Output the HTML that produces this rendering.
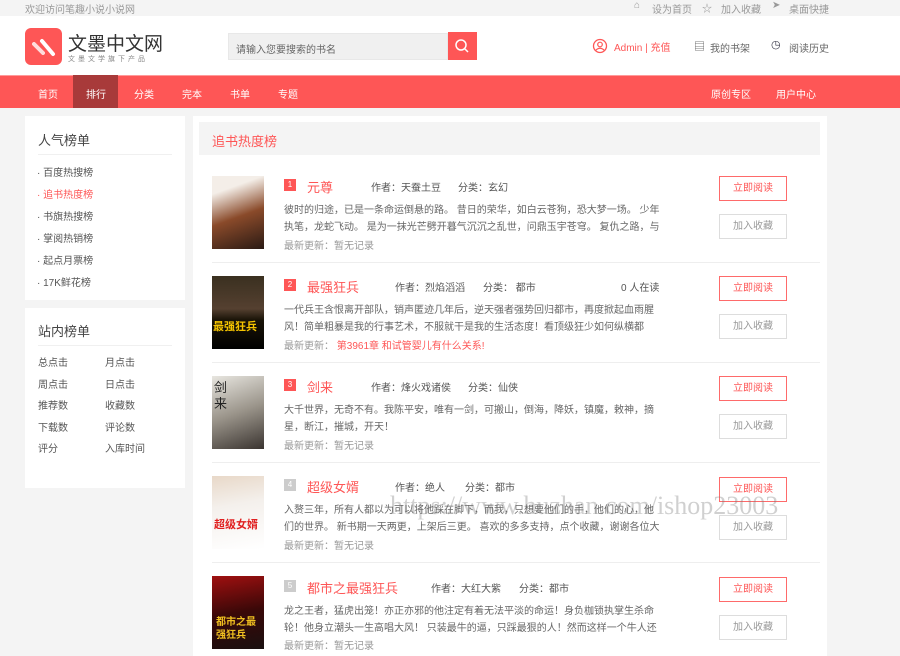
<!DOCTYPE html><html><head><meta charset="utf-8"><style>
*{margin:0;padding:0;box-sizing:border-box}
body{width:900px;height:652px;overflow:hidden;background:#f4f4f4;font-family:"Liberation Sans","Noto Sans CJK SC",sans-serif;font-size:11px;color:#555;position:relative}
.a{position:absolute;white-space:nowrap}
.top{position:absolute;left:0;top:0;width:900px;height:16px;background:#f4f4f4;color:#999;font-size:10px}
.hdr{position:absolute;left:0;top:16px;width:900px;height:59px;background:#fff}
.nav{position:absolute;left:0;top:75px;width:900px;height:33px;background:#fe5656;border-top:1px solid #ff9a9a}
.nav span{position:absolute;top:10px;color:#fff;font-size:10px}
.box{position:absolute;background:#fff}
.cover{position:absolute;left:212px;width:52px;height:73px}
.badge{position:absolute;left:284px;width:12px;height:12px;background:#fe5656;color:#fff;font-size:8px;text-align:center;line-height:12px}
.t{color:#fe5656;font-size:13px}
.desc{position:absolute;left:284px;width:378px;white-space:normal;font-size:10px;line-height:17px;color:#666;height:34px;overflow:hidden}
.btn{position:absolute;left:719px;width:68px;height:25px;font-size:10px;text-align:center;line-height:23px}
.r{border:1px solid #fe6a6a;color:#fe5656}
.g{border:1px solid #ddd;color:#999}
.sep{position:absolute;left:212px;width:608px;height:1px;background:#eee}
</style></head><body>
<div class="top"><span class="a" style="left:25px;top:1px">欢迎访问笔趣小说小说网</span>
<span class="a" style="left:634px;top:0px">⌂</span><span class="a" style="left:652px;top:1px">设为首页</span>
<span class="a" style="left:702px;top:0px">☆</span><span class="a" style="left:721px;top:1px">加入收藏</span>
<span class="a" style="left:772px;top:0px">➤</span><span class="a" style="left:789px;top:1px">桌面快捷</span></div>
<div class="hdr">
<div class="a" style="left:25px;top:12px;width:37px;height:37px;background:#fe5656;border-radius:6px">
<svg width="37" height="37"><path d="M9 16 L18 25" stroke="#fff" stroke-width="4" stroke-linecap="round" opacity=".8"/><path d="M17 13 L28 26" stroke="#fff" stroke-width="4" stroke-linecap="round"/></svg></div>
<span class="a" style="left:68px;top:13px;font-size:19px;color:#333">文墨中文网</span>
<span class="a" style="left:68px;top:38px;font-size:7px;color:#888;letter-spacing:3px">文墨文学旗下产品</span>
<div class="a" style="left:228px;top:17px;width:220px;height:27px;background:#f0f0f0;border:1px solid #e8e8e8"><span class="a" style="left:7px;top:7px;color:#666;font-size:10px">请输入您要搜索的书名</span></div>
<div class="a" style="left:448px;top:16px;width:29px;height:28px;background:#fe5656"><svg width="29" height="28"><circle cx="13" cy="13" r="5" fill="none" stroke="#fff" stroke-width="1.5"/><path d="M17 17 L20 20" stroke="#fff" stroke-width="1.5"/></svg></div>
<svg class="a" style="left:592px;top:22px" width="16" height="16"><circle cx="8" cy="8" r="6.5" fill="none" stroke="#fe5656" stroke-width="1.3"/><circle cx="8" cy="6.5" r="2.3" fill="none" stroke="#fe5656" stroke-width="1.2"/><path d="M3.5 12.5 Q8 8 12.5 12.5" fill="none" stroke="#fe5656" stroke-width="1.2"/></svg>
<span class="a" style="left:614px;top:23px;color:#fe5656;font-size:10px">Admin | 充值</span>
<span class="a" style="left:694px;top:22px;color:#555">▤</span><span class="a" style="left:710px;top:24px;color:#666;font-size:10px">我的书架</span>
<span class="a" style="left:771px;top:22px;color:#334">◷</span><span class="a" style="left:789px;top:24px;color:#666;font-size:10px">阅读历史</span>
</div>
<div class="nav"><div class="a" style="left:73px;top:-1px;width:45px;height:33px;background:#a83a3a"></div>
<span style="left:38px">首页</span><span style="left:86px">排行</span><span style="left:134px">分类</span><span style="left:182px">完本</span><span style="left:230px">书单</span><span style="left:278px">专题</span><span style="left:711px">原创专区</span><span style="left:776px">用户中心</span></div>

<div class="box" style="left:25px;top:116px;width:160px;height:184px">
<span class="a" style="left:13px;top:14px;font-size:13px;color:#444">人气榜单</span>
<div class="a" style="left:13px;top:38px;width:134px;height:1px;background:#f0f0f0"></div>
<div class="a" style="left:12px;top:47px;line-height:22px;font-size:10px;color:#555">· 百度热搜榜<br><span style="color:#fe5656">· 追书热度榜</span><br>· 书旗热搜榜<br>· 掌阅热销榜<br>· 起点月票榜<br>· 17K鲜花榜</div></div>
<div class="box" style="left:25px;top:308px;width:160px;height:180px">
<span class="a" style="left:13px;top:13px;font-size:13px;color:#444">站内榜单</span>
<div class="a" style="left:13px;top:37px;width:134px;height:1px;background:#f0f0f0"></div>
<div class="a" style="left:13px;top:45px;line-height:21.5px;font-size:10px;color:#555">总点击<br>周点击<br>推荐数<br>下载数<br>评分</div>
<div class="a" style="left:80px;top:45px;line-height:21.5px;font-size:10px;color:#555">月点击<br>日点击<br>收藏数<br>评论数<br>入库时间</div></div>

<div class="box" style="left:193px;top:116px;width:634px;height:540px"></div>
<div class="a" style="left:199px;top:122px;width:621px;height:33px;background:#f4f4f4"><span class="a" style="left:13px;top:9px;color:#fe5656;font-size:13px">追书热度榜</span></div>

<div class="cover" style="top:176px;background:linear-gradient(160deg,#f4eee8 20%,#8a4a2a 55%,#2a1a14)"></div>
<div class="badge" style="top:179px">1</div>
<span class="a t" style="left:307px;top:177px">元尊</span>
<span class="a" style="left:371px;top:179px;font-size:10px">作者：天蚕土豆</span><span class="a" style="left:458px;top:179px;font-size:10px">分类：玄幻</span>
<div class="desc" style="top:202px">彼时的归途，已是一条命运倒悬的路。 昔日的荣华，如白云苍狗，恐大梦一场。 少年执笔，龙蛇飞动。 是为一抹光芒劈开暮气沉沉之乱世，问鼎玉宇苍穹。 复仇之路，与吾同...</div>
<span class="a" style="left:284px;top:237px;font-size:10px;color:#999">最新更新：暂无记录</span>
<div class="btn r" style="top:176px">立即阅读</div><div class="btn g" style="top:214px">加入收藏</div>
<div class="sep" style="top:262px"></div>

<div class="cover" style="top:276px;background:linear-gradient(180deg,#3a3020,#554030 45%,#1a1408 60%,#000)"><span class="a" style="left:1px;top:42px;color:#f5c400;font-size:11px;font-weight:bold">最强狂兵</span></div>
<div class="badge" style="top:279px">2</div>
<span class="a t" style="left:307px;top:277px">最强狂兵</span>
<span class="a" style="left:395px;top:279px;font-size:10px">作者：烈焰滔滔</span><span class="a" style="left:483px;top:279px;font-size:10px">分类： 都市</span>
<span class="a" style="left:621px;top:279px;font-size:10px">0 人在读</span>
<div class="desc" style="top:302px">一代兵王含恨离开部队，销声匿迹几年后，逆天强者强势回归都市，再度掀起血雨腥风！简单粗暴是我的行事艺术，不服就干是我的生活态度！看顶级狂少如何纵横都市，书写属于...</div>
<span class="a" style="left:284px;top:337px;font-size:10px;color:#999">最新更新： <span style="color:#fe5656">第3961章 和试管婴儿有什么关系!</span></span>
<div class="btn r" style="top:276px">立即阅读</div><div class="btn g" style="top:314px">加入收藏</div>
<div class="sep" style="top:362px"></div>

<div class="cover" style="top:376px;background:linear-gradient(160deg,#e8e6e0,#9a948a 50%,#3a3430)"><span class="a" style="left:2px;top:4px;font-size:13px;color:#222;line-height:16px;white-space:normal;width:14px">剑来</span></div>
<div class="badge" style="top:379px">3</div>
<span class="a t" style="left:307px;top:377px">剑来</span>
<span class="a" style="left:371px;top:379px;font-size:10px">作者：烽火戏诸侯</span><span class="a" style="left:468px;top:379px;font-size:10px">分类：仙侠</span>
<div class="desc" style="top:402px">大千世界，无奇不有。我陈平安，唯有一剑，可搬山，倒海，降妖，镇魔，敕神，摘星，断江，摧城，开天！</div>
<span class="a" style="left:284px;top:437px;font-size:10px;color:#999">最新更新：暂无记录</span>
<div class="btn r" style="top:376px">立即阅读</div><div class="btn g" style="top:414px">加入收藏</div>
<div class="sep" style="top:462px"></div>

<div class="cover" style="top:476px;background:linear-gradient(170deg,#e8d8c8,#f4f0ec 40%,#fff)"><span class="a" style="left:2px;top:40px;color:#e02020;font-size:11px;font-weight:bold">超级女婿</span></div>
<div class="badge" style="top:479px;background:#ccc">4</div>
<span class="a t" style="left:307px;top:477px">超级女婿</span>
<span class="a" style="left:395px;top:479px;font-size:10px">作者：绝人</span><span class="a" style="left:465px;top:479px;font-size:10px">分类：都市</span>
<div class="desc" style="top:502px">入赘三年，所有人都以为可以将他踩在脚下，而我，只想要他们的手，他们的心，他们的世界。 新书期一天两更，上架后三更。 喜欢的多多支持，点个收藏，谢谢各位大佬。</div>
<span class="a" style="left:284px;top:537px;font-size:10px;color:#999">最新更新：暂无记录</span>
<div class="btn r" style="top:477px">立即阅读</div><div class="btn g" style="top:515px">加入收藏</div>
<div class="sep" style="top:562px"></div>
<span class="a" style="left:390px;top:491px;font-size:26px;font-family:'Liberation Serif',serif;color:rgba(120,120,120,.35)">https://www.huzhan.com/ishop23003</span>

<div class="cover" style="top:576px;background:linear-gradient(170deg,#a01010,#3a0808 50%,#1a1010)"><span class="a" style="left:4px;top:40px;color:#f0c020;font-size:10px;font-weight:bold;line-height:13px;white-space:normal;width:48px">都市之最强狂兵</span></div>
<div class="badge" style="top:580px;background:#ccc">5</div>
<span class="a t" style="left:307px;top:578px">都市之最强狂兵</span>
<span class="a" style="left:431px;top:580px;font-size:10px">作者：大红大紫</span><span class="a" style="left:519px;top:580px;font-size:10px">分类：都市</span>
<div class="desc" style="top:603px">龙之王者，猛虎出笼！亦正亦邪的他注定有着无法平淡的命运！身负枷锁执掌生杀命轮！他身立潮头一生高唱大风！ 只装最牛的逼，只踩最狠的人！然而这样一个牛人还偏偏魅力十...</div>
<span class="a" style="left:284px;top:637px;font-size:10px;color:#999">最新更新：暂无记录</span>
<div class="btn r" style="top:577px">立即阅读</div><div class="btn g" style="top:615px">加入收藏</div>
</body></html>
